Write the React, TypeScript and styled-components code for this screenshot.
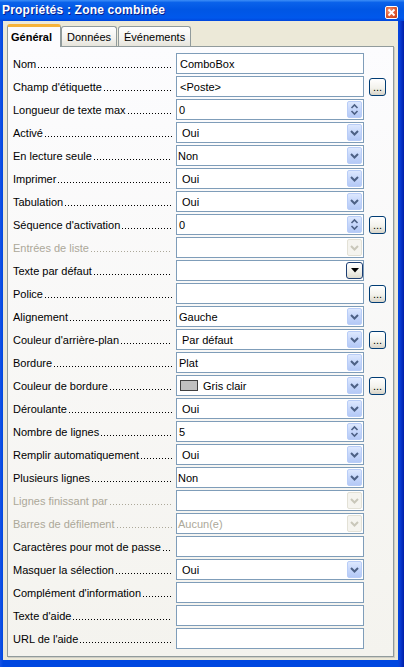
import styled, { createGlobalStyle, css } from "styled-components";

const Global = createGlobalStyle`
  html, body {
    margin: 0;
    padding: 0;
    background: #0047e0;
  }
  * {
    box-sizing: border-box;
  }
`;

const Window = styled.div`
  width: 404px;
  height: 667px;
  display: flex;
  flex-direction: column;
  background: linear-gradient(to right, #1553e6 0px, #0047e0 3px, #0047e0 398px, #0a3dd6 400px, #001ea8 404px);
  font-family: "Liberation Sans", Arial, sans-serif;
  font-size: 11px;
  color: #000;
`;

const TitleBar = styled.div`
  height: 21px;
  display: flex;
  align-items: flex-end;
  justify-content: space-between;
  padding: 0 6px 2px 2px;
  background: linear-gradient(
    to bottom,
    #3d8ef7 0%,
    #0a62ea 12%,
    #0056e4 45%,
    #0058ec 85%,
    #0046dc 100%
  );
`;

const Title = styled.span`
  color: #fff;
  font-size: 12px;
  font-weight: bold;
  letter-spacing: 0.2px;
  line-height: 15px;
  padding-bottom: 1px;
  text-shadow: 1px 1px 0 #0a1e8c;
`;

const CloseButton = styled.div`
  width: 13px;
  height: 13px;
  border: 1px solid #fff;
  border-radius: 2px;
  background: radial-gradient(circle at 35% 35%, #f0a080 0%, #e2603a 45%, #c23a15 100%);
  display: flex;
  align-items: center;
  justify-content: center;
`;

const Body = styled.div`
  flex: 1;
  display: flex;
  flex-direction: column;
  margin: 0 6px 7px 3px;
  padding: 2px 4px 3px 4px;
  background: #ece9d8;
`;

const TabStrip = styled.div`
  display: flex;
  align-items: flex-end;
  height: 23px;
  position: relative;
  z-index: 1;
`;

const Tab = styled.div<{ $active?: boolean }>`
  height: 20px;
  padding: 0 5px 0 5px;
  margin-right: 1px;
  display: flex;
  align-items: center;
  border: 1px solid #919b9c;
  border-bottom: none;
  border-radius: 3px 3px 0 0;
  background: linear-gradient(to bottom, #ffffff, #f3f2ee 60%, #e6e4db);
  ${(p) =>
    p.$active &&
    css`
      height: 23px;
      margin-bottom: -1px;
      margin-right: 0;
      padding: 0 8px 1px 3px;
      font-weight: bold;
      border-top: 3px solid #f6b33a;
      background: #fcfcfe;
      position: relative;
      z-index: 2;
    `}
`;

const Panel = styled.div`
  flex: 1;
  border: 1px solid #919b9c;
  box-shadow: 1px 1px 0 #d0cec4;
  background: linear-gradient(to bottom, #fcfcfe, #f4f3ee);
  padding: 6px 0 0 5px;
  display: flex;
  flex-direction: column;
  gap: 2px;
`;

const Row = styled.div`
  display: grid;
  grid-template-columns: 163px 188px 22px;
  height: 21px;
  align-items: center;
`;

const Label = styled.div<{ $disabled?: boolean }>`
  width: 159px;
  display: flex;
  align-items: baseline;
  white-space: nowrap;
  color: ${(p) => (p.$disabled ? "#aca899" : "#000")};
`;

/* the dotted leader after each label */
const Leader = styled.span`
  flex: 1;
  height: 1px;
  margin-left: 2px;
  background-image: linear-gradient(to right, currentColor 1px, transparent 1px);
  background-size: 3px 1px;
  background-repeat: repeat-x;
`;

const Field = styled.div<{ $pad: number }>`
  height: 21px;
  border: 1px solid #7f9db9;
  background: #fff;
  display: flex;
  align-items: center;
  padding: 1px;
  padding-left: ${(p) => p.$pad}px;
`;

const Value = styled.span<{ $disabled?: boolean }>`
  flex: 1;
  white-space: nowrap;
  color: ${(p) => (p.$disabled ? "#aca899" : "#000")};
`;

const DropButton = styled.div<{ $disabled?: boolean }>`
  width: 15px;
  height: 17px;
  align-self: center;
  border: 1px solid ${(p) => (p.$disabled ? "#e3e1d6" : "#b9cdf7")};
  border-radius: 2px;
  background: ${(p) =>
    p.$disabled
      ? "#f5f4ef"
      : "linear-gradient(to bottom, #dde8fe 0%, #c6d7fb 50%, #b4c9f6 100%)"};
  display: flex;
  align-items: center;
  justify-content: center;
`;

const PlainDropButton = styled.div`
  width: 17px;
  height: 17px;
  margin-right: -1px;
  border: 1px solid #1c3e72;
  border-radius: 3px;
  background: linear-gradient(to bottom, #ffffff, #f0efe8 60%, #dedbcf);
  display: flex;
  align-items: center;
  justify-content: center;
`;

const MoreButton = styled.div`
  justify-self: end;
  width: 17px;
  height: 18px;
  border: 1px solid #003c74;
  border-radius: 3px;
  background: linear-gradient(to bottom, #ffffff, #f3f2ec 55%, #d8d4c8);
  display: flex;
  align-items: flex-end;
  justify-content: center;
  font-size: 11px;
  line-height: 12px;
  padding-bottom: 2px;
`;

const Swatch = styled.span`
  width: 18px;
  height: 11px;
  margin-right: 5px;
  border: 1px solid #404040;
  background: #c0c0c0;
`;

type Kind = "text" | "spin" | "select" | "combo" | "color";

interface Prop {
  label: string;
  kind: Kind;
  value?: string;
  pad?: number;
  disabled?: boolean;
  more?: boolean;
}

const props: Prop[] = [
  { label: "Nom", kind: "text", value: "ComboBox", pad: 3 },
  { label: "Champ d'étiquette", kind: "text", value: "<Poste>", pad: 3, more: true },
  { label: "Longueur de texte max", kind: "spin", value: "0", pad: 2 },
  { label: "Activé", kind: "select", value: "Oui", pad: 5 },
  { label: "En lecture seule", kind: "select", value: "Non", pad: 1 },
  { label: "Imprimer", kind: "select", value: "Oui", pad: 5 },
  { label: "Tabulation", kind: "select", value: "Oui", pad: 5 },
  { label: "Séquence d'activation", kind: "spin", value: "0", pad: 2, more: true },
  { label: "Entrées de liste", kind: "select", disabled: true },
  { label: "Texte par défaut", kind: "combo" },
  { label: "Police", kind: "text", more: true },
  { label: "Alignement", kind: "select", value: "Gauche", pad: 2 },
  { label: "Couleur d'arrière-plan", kind: "select", value: "Par défaut", pad: 5, more: true },
  { label: "Bordure", kind: "select", value: "Plat", pad: 2 },
  { label: "Couleur de bordure", kind: "color", value: "Gris clair", pad: 3, more: true },
  { label: "Déroulante", kind: "select", value: "Oui", pad: 5 },
  { label: "Nombre de lignes", kind: "spin", value: "5", pad: 2 },
  { label: "Remplir automatiquement", kind: "select", value: "Oui", pad: 5 },
  { label: "Plusieurs lignes", kind: "select", value: "Non", pad: 1 },
  { label: "Lignes finissant par", kind: "select", disabled: true },
  { label: "Barres de défilement", kind: "select", value: "Aucun(e)", pad: 1, disabled: true },
  { label: "Caractères pour mot de passe", kind: "text" },
  { label: "Masquer la sélection", kind: "select", value: "Oui", pad: 5 },
  { label: "Complément d'information", kind: "text" },
  { label: "Texte d'aide", kind: "text" },
  { label: "URL de l'aide", kind: "text" },
];

function Chevron({ disabled }: { disabled?: boolean }) {
  return (
    <svg width="9" height="6" viewBox="0 0 9 6">
      <polyline
        points="1,1 4.5,4.5 8,1"
        fill="none"
        stroke={disabled ? "#c9c7ba" : "#4d6185"}
        strokeWidth="2"
      />
    </svg>
  );
}

function SpinArrows() {
  return (
    <svg width="9" height="13" viewBox="0 0 9 13">
      <polyline points="1.5,5 4.5,2 7.5,5" fill="none" stroke="#4d6185" strokeWidth="1.6" />
      <polyline points="1.5,8 4.5,11 7.5,8" fill="none" stroke="#4d6185" strokeWidth="1.6" />
    </svg>
  );
}

function PropertyRow({ p }: { p: Prop }) {
  const button =
    p.kind === "select" || p.kind === "color" ? (
      <DropButton $disabled={p.disabled}>
        <Chevron disabled={p.disabled} />
      </DropButton>
    ) : p.kind === "spin" ? (
      <DropButton>
        <SpinArrows />
      </DropButton>
    ) : p.kind === "combo" ? (
      <PlainDropButton>
        <svg width="8" height="5" viewBox="0 0 8 5">
          <polygon points="0,0 8,0 4,4.5" fill="#000" />
        </svg>
      </PlainDropButton>
    ) : null;

  return (
    <Row>
      <Label $disabled={p.disabled}>
        {p.label}
        <Leader />
      </Label>
      <Field $pad={p.pad ?? 3}>
        {p.kind === "color" && <Swatch />}
        <Value $disabled={p.disabled}>{p.value}</Value>
        {button}
      </Field>
      {p.more && <MoreButton>...</MoreButton>}
    </Row>
  );
}

export default function App() {
  return (
    <>
      <Global />
      <Window>
        <TitleBar>
          <Title>Propriétés : Zone combinée</Title>
          <CloseButton>
            <svg width="9" height="9" viewBox="0 0 9 9">
              <path d="M1.5 1.5 L7.5 7.5 M7.5 1.5 L1.5 7.5" stroke="#fff" strokeWidth="1.8" />
            </svg>
          </CloseButton>
        </TitleBar>
        <Body>
          <TabStrip>
            <Tab $active>Général</Tab>
            <Tab>Données</Tab>
            <Tab>Événements</Tab>
          </TabStrip>
          <Panel>
            {props.map((p) => (
              <PropertyRow key={p.label} p={p} />
            ))}
          </Panel>
        </Body>
      </Window>
    </>
  );
}
